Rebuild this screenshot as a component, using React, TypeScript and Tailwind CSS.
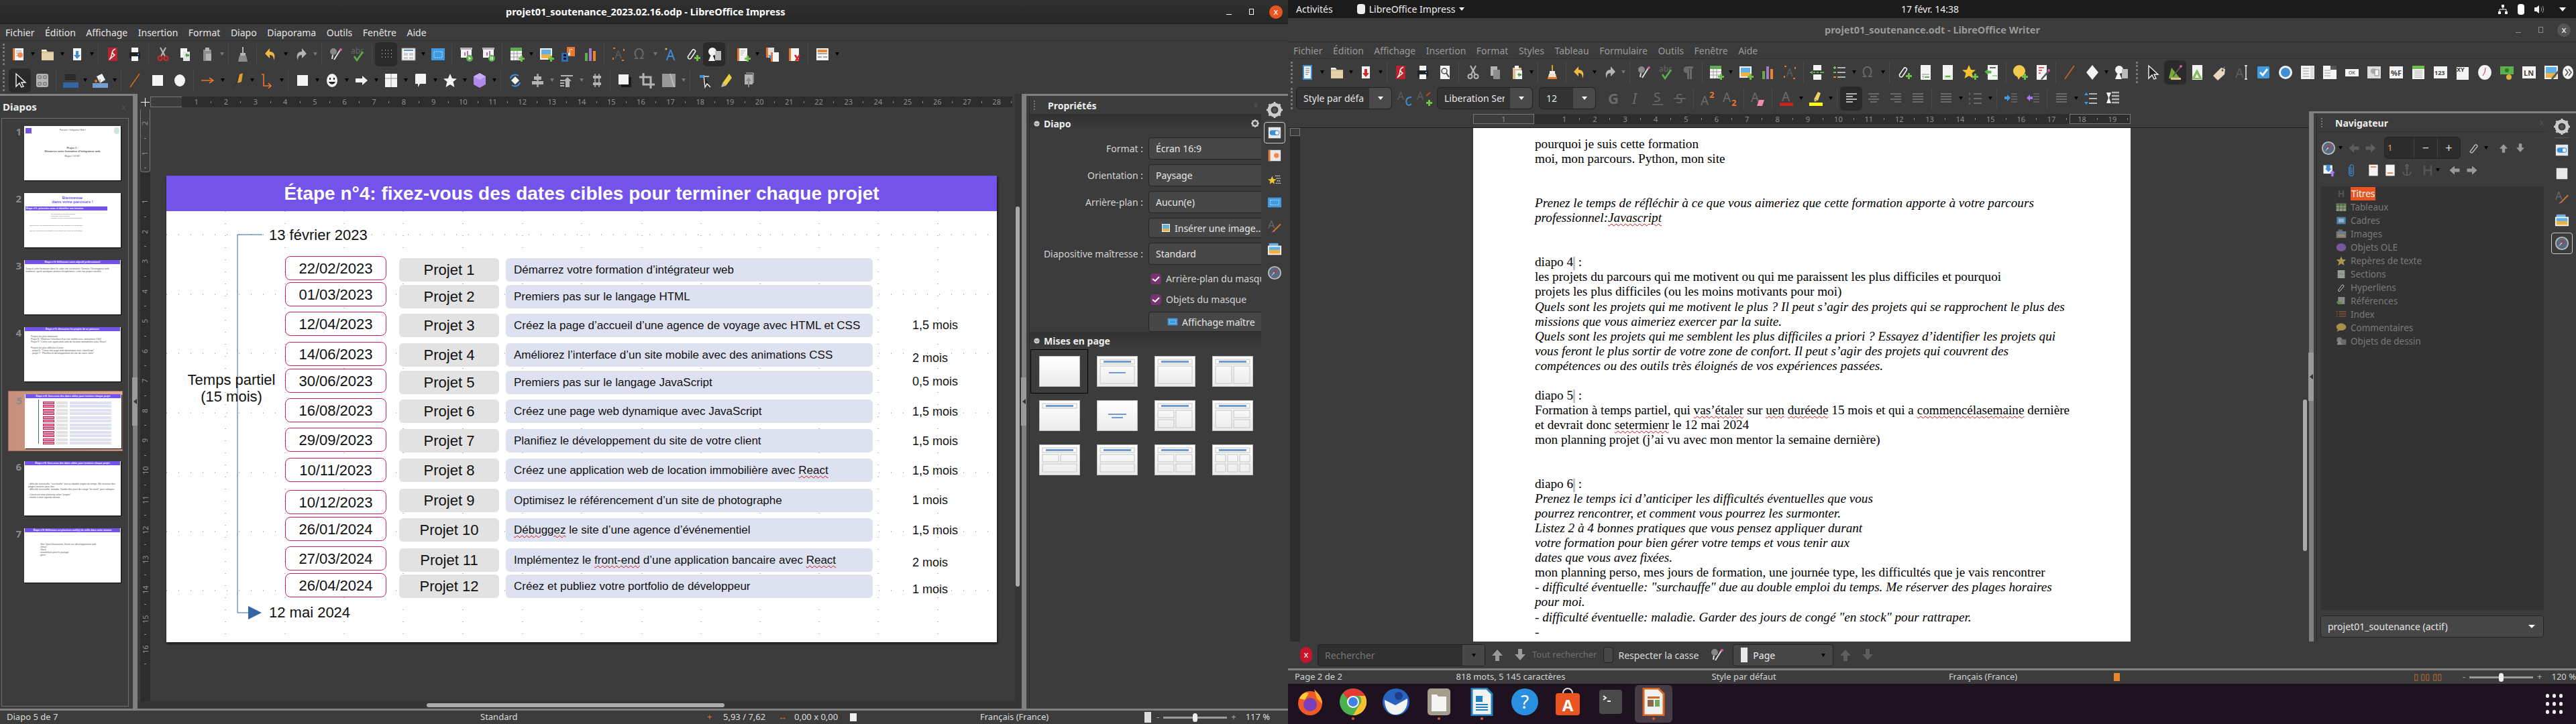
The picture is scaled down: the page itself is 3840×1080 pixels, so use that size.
import type { ReactNode } from "react";

const W = "#f4f4f4";
const G = "#b4b4b4";
const D = "#6a6a6a";

const icons: Record<string, ReactNode> = {
  new: <><path d="M4 3h16v18H4z" fill={W} /><path d="M4 3h3v18H4z" fill="#e8762c" /><circle cx="15" cy="13" r="4" fill="#f0894a" /><path d="M9 7h8M9 10h3M9 14h2" stroke="#999" /></>,
  newW: <><path d="M5 1h14v22H5z" fill="#3f8ed8" /><path d="M7 3h10v18H7z" fill={W} /><path d="M9 6h6M9 9h6M9 12h6M9 15h4" stroke="#777" /></>,
  folder: <><path d="M3 6h7l2 2h9v13H3z" fill="#e6d2aa" /><path d="M3 5h7l1 2H3z" fill={W} /><path d="M3 9h18" stroke="#c5ae82" /></>,
  save: <><path d="M6 3h12v18H6z" fill={W} /><path d="M10 7h4v6h3l-5 6-5-6h3z" fill="#3f8ed8" /></>,
  saveR: <><path d="M6 3h12v18H6z" fill={W} /><path d="M10 7h4v6h3l-5 6-5-6h3z" fill="#d6282c" /></>,
  pdf: <><path d="M5 2h14v20H5z" fill="#b8232f" /><path d="M16 4c-6 3-6 6-1 9-2 2-5 4-8 7 3-4 4-8 4-11" stroke={W} fill="none" strokeWidth="1.4" /></>,
  print: <><path d="M7 2h10v7H7z" fill={W} /><path d="M4 9h16v9H4z" fill="#222" /><path d="M7 15h10v7H7z" fill={W} /><path d="M16 11h2v2h-2z" fill="#3f8ed8" /></>,
  preview: <><path d="M5 2h14v20H5z" fill={W} /><circle cx="11" cy="10" r="4" fill="none" stroke="#444" strokeWidth="1.5" /><path d="M14 13l4 6" stroke="#444" strokeWidth="2" /></>,
  cut: <><path d="M8 2l7 13M16 2L9 15" stroke={G} strokeWidth="2.2" /><circle cx="7.5" cy="18" r="3" fill="none" stroke="#d6282c" strokeWidth="2" /><circle cx="16.5" cy="18" r="3" fill="none" stroke="#d6282c" strokeWidth="2" /></>,
  cutG: <><path d="M8 2l7 13M16 2L9 15" stroke={G} strokeWidth="2.2" /><circle cx="7.5" cy="18" r="3" fill="none" stroke={G} strokeWidth="2" /><circle cx="16.5" cy="18" r="3" fill="none" stroke={G} strokeWidth="2" /></>,
  copy: <><path d="M5 3h10v14H5z" fill={W} /><path d="M9 8h10v14H9z" fill="#e6e6e6" /><path d="M12 13l3-3v2h3v3h-3v2z" fill="#52a34a" /></>,
  copyG: <><path d="M5 3h10v14H5z" fill={G} /><path d="M9 8h10v14H9z" fill="#8c8c8c" /></>,
  paste: <><path d="M6 5h12v17H6z" fill="#8c8c8c" /><path d="M9 2h6v5H9z" fill={G} /><path d="M10 11h8v10h-8z" fill={G} /></>,
  pasteO: <><path d="M5 5h13v17H5z" fill="#d9bf8a" /><path d="M8 2h6v5H8z" fill={W} /><path d="M9 9h10v13H9z" fill={W} /><path d="M12 15l3-3v2h3v3h-3v2z" fill="#52a34a" /></>,
  brush: <><path d="M11 1h2v9h-2z" fill={G} /><path d="M8 10h8v4H8z" fill={G} /><path d="M7 14h10l2 9H5z" fill="#8c8c8c" /></>,
  brushO: <><path d="M11 1h2v9h-2z" fill="#e0a030" /><path d="M8 10h8v4H8z" fill={W} /><path d="M7 14h10l1 5H6z" fill="#e8e0c8" /><path d="M5 19h14v3H5z" fill="#e8762c" /></>,
  undo: <><path d="M10 3L3 11l7 7v-5c4 0 6 2 6 8 3-7 1-13-6-13z" fill="#f0b840" /></>,
  redo: <><path d="M14 3l7 8-7 7v-5c-4 0-6 2-6 8-3-7-1-13 6-13z" fill={G} /></>,
  spell: <><circle cx="8" cy="8" r="5" fill="#888" /><path d="M7 13l-1 6M19 4L9 20" stroke="#ddd" strokeWidth="2" /><circle cx="19" cy="5" r="2" fill="#d65aa0" /></>,
  abc: <><text x="1" y="11" fontSize="12" fill="#666" fontFamily="Noto Sans">abc</text><path d="M6 15l4 6 9-13" stroke="#5bb04a" strokeWidth="2.6" fill="none" /></>,
  grid: <path d="M5 6h1M10 6h1M14 6h1M19 6h1M5 11h1M10 11h1M14 11h1M19 11h1M5 16h1M10 16h1M14 16h1M19 16h1" stroke={G} strokeWidth="1.6" />,
  tview: <><path d="M2 3h20v18H2z" fill={W} stroke="#999" /><path d="M5 6h14" stroke="#5a90d0" strokeWidth="2" /><path d="M5 10h6v4H5zM13 10h6v4h-6zM5 16h6v3H5zM13 16h6v3h-6z" fill="#ccc" /></>,
  master: <><path d="M2 3h20v18H2z" fill="#3f9ae0" /><path d="M6 8h12v9H6z" fill="none" stroke="#bfe0fa" strokeDasharray="2 1" /></>,
  pres1: <><path d="M3 2h18v3H3z" fill={G} /><path d="M4 5h16v12H4z" fill={W} /><path d="M9 14V9h2v5zM13 14V7h2v7z" fill="#b070b0" /><circle cx="17" cy="18" r="5" fill="#5bb04a" /><path d="M15.5 15.5l4 2.5-4 2.5z" fill={W} /></>,
  pres2: <><path d="M3 2h18v3H3z" fill={G} /><path d="M4 5h16v12H4z" fill={W} /><path d="M9 14V9h2v5zM13 14V7h2v7z" fill="#b070b0" /><circle cx="17" cy="18" r="5" fill="#5bb04a" /><path d="M15 15.5h1.5v5H15zM17.5 15.5H19v5h-1.5z" fill={W} /></>,
  tablep: <><path d="M3 2h17v19H3z" fill={W} /><path d="M3 2h17v5H3z" fill="#5bb04a" /><path d="M8 2v19M13 2v19M3 11h17M3 16h17" stroke="#888" strokeWidth=".8" /><path d="M15 17h3v-3h3v3h3v3h-3v3h-3v-3h-3z" fill="#6fc04a" /></>,
  img: <><path d="M3 3h18v17H3z" fill={W} /><path d="M5 5h14v7H5z" fill="#5fb0e8" /><path d="M5 12h14v6H5z" fill="#f0b040" /><path d="M15 17h3v-3h3v3h3v3h-3v3h-3v-3h-3z" fill="#6fc04a" /></>,
  media: <><path d="M10 1h12v14H10z" fill="#e8762c" /><path d="M15 4v7a2 2 0 1 1-1-1V4h4v2z" fill={W} /><path d="M2 10h10v13H2z" fill="#2a6fb8" /><path d="M5 12h4v3H5zM5 17h4v3H5z" fill="#111" /></>,
  chart: <><path d="M4 10h4v12H4z" fill="#5bb04a" /><path d="M10 3h4v19h-4z" fill="#a878c8" /><path d="M16 7h4v15h-4z" fill="#e8862c" /></>,
  textbox: <><path d="M4 3h16v18H4z" fill="none" stroke="#e8762c" strokeDasharray="3 14" strokeWidth="2" /><text x="6.5" y="18" fontSize="16" fill="#5c5c5c" fontFamily="Noto Sans">A</text></>,
  omega: <text x="2" y="19" fontSize="21" fill={D} fontFamily="Noto Sans">Ω</text>,
  fontwork: <><text x="6" y="21" fontSize="21" fill="#3f8ed8" fontFamily="Noto Sans">A</text><circle cx="6" cy="4" r="1.5" fill="#f0b840" /></>,
  linkp: <><path d="M5 16l7-10a2.5 2.5 0 0 1 4 3l-6 9a2.5 2.5 0 0 1-4-3z" fill="none" stroke={W} strokeWidth="1.5" /><path d="M15 16h3v-3h3v3h3v3h-3v3h-3v-3h-3z" fill="#6fc04a" /></>,
  shapes: <><circle cx="9" cy="8" r="6" fill={W} /><path d="M13 7h9v14h-9z" fill="#bbb" /><path d="M8 10l5 12H3z" fill={W} /></>,
  slidep: <><path d="M4 3h15v19H4z" fill={W} /><path d="M4 3h3v19H4z" fill="#e8762c" /><path d="M9 7h7M9 10h5M9 13h3" stroke="#aaa" /><path d="M15 17h3v-3h3v3h3v3h-3v3h-3v-3h-3z" fill="#6fc04a" /></>,
  slidedup: <><path d="M3 2h12v15H3z" fill="#ddd" /><path d="M3 2h3v15H3z" fill="#e8762c" /><path d="M10 9h12v14H10z" fill={W} /><path d="M10 9h3v14h-3z" fill="#e8762c" /><path d="M6 13l4 6 2-5z" fill="#3f8ed8" /></>,
  slidedel: <><path d="M4 3h15v19H4z" fill={W} /><path d="M4 3h3v19H4z" fill="#e8762c" /><path d="M13 13l6 9M20 13l-6 9" stroke="#d6282c" strokeWidth="2.6" /></>,
  slidelay: <><path d="M3 3h18v18H3z" fill={W} /><path d="M5 5h14v4H5z" fill="#e8862c" /><path d="M5 11h14M5 16h6M13 16h6" stroke="#888" strokeWidth="1.6" /></>,
  select: <path d="M6 2v19l5-5 3 6 3-1-3-6h6z" fill="#222" stroke={W} strokeWidth="1.4" />,
  zoompan: <><rect x="3" y="2" width="18" height="20" rx="3" fill={G} /><path d="M6 5h4v4H6zM14 5h4v4h-4zM6 15h4v4H6zM14 15h4v4h-4z" fill="none" stroke="#666" /></>,
  linecol: <><path d="M4 4h16M4 7h16M4 10h16" stroke="#222" strokeWidth="2" /><path d="M1 15h23v8H1z" fill="#3465a4" /></>,
  fillcol: <><path d="M7 6l8-4 5 9-8 5z" fill={W} /><path d="M12 10v6" stroke="#666" /><circle cx="6" cy="13" r="2" fill="#e8762c" /><path d="M1 16h23v7H1z" fill="#729fcf" /></>,
  line: <path d="M4 22L18 2" stroke="#d0651e" strokeWidth="1.6" />,
  rect: <path d="M4 4h16v16H4z" fill={W} />,
  ellipse: <ellipse cx="12" cy="12" rx="8" ry="9" fill={W} />,
  arrow: <path d="M2 12h16M14 8l6 4-6 4" stroke="#e8762c" strokeWidth="1.6" fill="none" />,
  curve: <><path d="M14 4c-6 4 2 8-3 12s-6 3-6 6" stroke="#333" strokeWidth="1.6" fill="none" /><path d="M15 3l5-2-2 13-6 2z" fill="#e0a030" /></>,
  conn: <path d="M4 3h3v17h10M14 16l4 4-4 4" stroke="#e8762c" strokeWidth="1.6" fill="none" />,
  smiley: <><ellipse cx="12" cy="12" rx="8" ry="10" fill={W} /><path d="M9 8v3M15 8v3" stroke="#222" strokeWidth="2" /><path d="M7 14c2 5 8 5 10 0z" fill="#222" /></>,
  arrowr: <path d="M3 9h10V5l8 7-8 7v-4H3z" fill={W} />,
  flow: <><path d="M3 2h18v20H3z" fill={W} /><path d="M12 2v20M3 9h18" stroke="#999" /></>,
  callout: <path d="M5 2h14a1 1 0 0 1 1 1v14H11l-3 5v-5H4V3z" fill={W} />,
  star: <path d="M12 2l3 7 7 .5-5.5 4.5 2 8-6.500-4-6.500 4 2-8L2 9.500 9 9z" fill={W} />,
  cube: <><path d="M12 1l9 5v12l-9 5-9-5V6z" fill="#b08ae8" /><path d="M3 6l9 5 9-5-9-5z" fill="#c8aaf4" /></>,
  rotate: <><path d="M12 6l6 6-6 6-6-6z" fill={W} /><path d="M5 9c1-5 7-7 12-4M19 15c-1 5-7 7-12 4" stroke="#3f8ed8" strokeWidth="2" fill="none" /></>,
  align: <><path d="M11 2h3v20h-3z" fill="#999" /><path d="M7 6h11v5H7zM4 13h17v5H4z" fill={G} /></>,
  arrange: <><path d="M3 5h18" stroke={G} strokeWidth="2" /><path d="M13 7l6 6h-3v9h-6v-9H7z" fill={G} /><path d="M2 12h6M2 16h6M2 20h6" stroke={G} strokeWidth="2" /></>,
  distr: <><path d="M9 2h2v20H9zM15 2h2v20h-2z" fill="#999" /><path d="M7 5h12v4H7zM7 15h12v4H7z" fill={G} /></>,
  shadow: <><path d="M7 7h15v15H7z" fill="#1b1b1b" /><path d="M3 3h15v15H3z" fill={W} /></>,
  crop: <path d="M7 1v17h17M1 7h17v17" stroke={G} strokeWidth="3" fill="none" />,
  filter: <><path d="M2 2h20v20H2z" fill="#999" /><path d="M14 2l6 20" stroke="#bbb" strokeWidth="2" /></>,
  points: <><path d="M11 4l2 18 3-5 5 5" stroke={W} fill="#222" strokeWidth="1.4" /><path d="M5 4h6v4H5z" fill="#3f8ed8" /><path d="M11 6h8" stroke={G} strokeWidth="2" /></>,
  glue: <><path d="M6 16L16 2l4 6-9 12z" fill="#ecd040" /><path d="M6 16l5 4-7 2z" fill="#bbb" /></>,
  ext3d: <><path d="M6 3h12v15H6z" fill={G} /><path d="M8 1h11v15" stroke="#ccc" fill="none" /><path d="M12 7l4 6h-3v9h-2v-9H8z" fill="#8c8c8c" /></>,
  para: <path d="M9 3h10v3h-2v16h-3V6h-1v16h-3v-9a5 5 0 0 1-1-10z" fill={D} />,
  pagebr: <><path d="M6 1h12v8H6zM6 15h12v8H6z" fill={W} /><path d="M1 12h3M6 12h3M11 12h3M16 12h6" stroke="#5bb04a" strokeWidth="2" /><path d="M2 12l3-3v6z" fill="#5bb04a" /></>,
  field: <><path d="M9 5h12M9 12h12M9 19h12" stroke={G} strokeWidth="2" /><path d="M3 5h4M5 3v4M3 12h4" stroke="#6fc04a" strokeWidth="2" /><path d="M3 19h4" stroke="#e8862c" strokeWidth="2" /></>,
  foot: <><path d="M4 1h15v22H4z" fill={W} /><path d="M6 15h11" stroke="#888" /><text x="6" y="21" fontSize="6" fill="#333" fontFamily="Noto Sans">1</text><path d="M10 18h7v2h-7z" fill="#5bb04a" /></>,
  end: <><path d="M4 1h15v22H4z" fill={W} /><path d="M6 16h11v5H6z" fill="#cfe8c4" /><path d="M8 18h7" stroke="#5bb04a" strokeWidth="2" /></>,
  bookmark: <><path d="M10 1l3 7 7 .5-5.500 4.500 2 8-6.500-4-6.500 4 2-8L0 8.500 7 8z" fill="#f2c230" /><path d="M15 17h3v-3h3v3h3v3h-3v3h-3v-3h-3z" fill="#6fc04a" /></>,
  xref: <><path d="M5 1h15v22H5z" fill={W} /><path d="M8 5h9" stroke="#666" strokeWidth="2" /><path d="M1 11l4-3v2h5v3H5v2zM12 17h7" stroke="#5bb04a" fill="#5bb04a" strokeWidth="1" /></>,
  comment: <><circle cx="11" cy="10" r="9" fill="#f2c94c" /><path d="M8 18l2 5 3-5z" fill="#f2c94c" /><path d="M15 17h3v-3h3v3h3v3h-3v3h-3v-3h-3z" fill="#6fc04a" /></>,
  track: <><path d="M4 1h15v22H4z" fill={W} /><path d="M7 5h8M7 9h5M7 13h3" stroke="#d6282c" strokeWidth="1.4" /><path d="M10 22l11-13 2 2-11 12z" fill="#555" /><circle cx="22" cy="9" r="2" fill="#d65aa0" /></>,
  diamond: <path d="M12 1l9 11-9 11-9-11z" fill={W} />,
  design: <><path d="M3 21L7 5l13 16z" fill="#79a83c" /><path d="M6 23h15v-3H6z" fill="#d9c28a" /><path d="M9 18L21 3" stroke="#555" strokeWidth="2" /><circle cx="21" cy="3" r="2" fill="#d65aa0" /></>,
  props: <><path d="M5 1h15v22H5z" fill={W} /><path d="M4 22L12 7l8 15z" fill="#72b04a" opacity=".85" /><path d="M9 20l3-6 3 6z" fill={W} /></>,
  tag: <><path d="M15 5l6 2-1 8-10 9-7-7z" fill="#e8d8c0" /><circle cx="17" cy="9" r="1.500" fill="#555" /><path d="M17 8c1-3 3-4 4-4" stroke="#999" fill="none" /></>,
  textA: <><text x="3" y="20" fontSize="20" fill="#5c5c5c" fontFamily="Noto Sans">A</text><path d="M17 2h4M19 2v20M17 22h4" stroke={W} strokeWidth="1.4" /></>,
  check: <><rect x="3" y="3" width="18" height="18" rx="2" fill="#3f9ae0" /><path d="M7 12l4 4 7-9" stroke={W} strokeWidth="3" fill="none" /></>,
  radio: <><circle cx="12" cy="12" r="10" fill={W} /><circle cx="12" cy="12" r="7" fill="#3f8ed8" /></>,
  listb: <><path d="M2 2h20v20H2z" fill={W} /><path d="M5 6h9M5 10h9M5 14h9M5 18h9" stroke="#999" /><path d="M16 3h5v18h-5z" fill="#ddd" /></>,
  combo: <><path d="M2 2h20v20H2z" fill={W} /><path d="M4 9h9M4 13h9M4 17h9" stroke="#999" /><path d="M13 2h9v6h-9z" fill="#555" /></>,
  btn: <><path d="M2 7h20v11H2z" fill={W} /><text x="7" y="15" fontSize="7" fill="#333" fontFamily="Noto Sans">OK</text></>,
  imgbtn: <><path d="M2 3h20v18H2z" fill="#ddd" /><circle cx="11" cy="10" r="4" fill="#aaa" /><path d="M13 8h6v9h-6z" fill={W} stroke="#888" /></>,
  fmt: <><path d="M2 3h20v18H2z" fill={W} /><text x="4" y="17" fontSize="11" fontWeight="700" fill="#444" fontFamily="Noto Sans">%F</text></>,
  calc: <><path d="M3 2h18v20H3z" fill={W} /><path d="M3 2h18v5H3z" fill="#6fc04a" /><path d="M6 10h12M6 13h12M6 16h12M6 19h12" stroke="#aaa" /></>,
  numf: <><path d="M2 3h20v18H2z" fill={W} /><text x="3" y="16" fontSize="9" fontWeight="700" fill="#444" fontFamily="Noto Sans">123</text></>,
  date: <><path d="M3 4h18v19H3z" fill={W} /><text x="3" y="11" fontSize="9" fontWeight="700" fill="#333" fontFamily="Noto Sans">XY</text></>,
  clock: <><ellipse cx="12" cy="12" rx="10" ry="11" fill={W} /><path d="M12 12l1-7M12 12l-3 5" stroke="#d6282c" /></>,
  currency: <><path d="M2 3h20v12H2z" fill="#5bb04a" /><circle cx="12" cy="9" r="3" fill="#2f7a2c" /><circle cx="15" cy="19" r="4" fill="#e0b030" /></>,
  pattern: <><path d="M2 3h20v18H2z" fill={W} /><text x="4" y="17" fontSize="11" fontWeight="700" fill="#444" fontFamily="Noto Sans">LN</text></>,
  imgctl: <><path d="M2 2h20v20H2z" fill={W} /><path d="M4 4h16v9H4z" fill="#5fb0e8" /><path d="M4 13h16v7H4z" fill="#f0b040" /><path d="M12 21L22 9l2 2-10 12z" fill="#555" /></>,
  more: <><ellipse cx="12" cy="12" rx="8" ry="10" fill={W} /><path d="M8 7l4 5-4 5M13 7l4 5-4 5" stroke="#555" strokeWidth="1.600" fill="none" /></>,
  styleup: <><text x="1" y="14" fontSize="16" fill="#5c5c5c" fontFamily="Noto Sans">A</text><path d="M22 10c-7 0-9 4-7 10 2 3 5 2 7 0" stroke="#3f8ed8" strokeWidth="2" fill="none" /></>,
  stylenew: <><text x="1" y="14" fontSize="16" fill="#5c5c5c" fontFamily="Noto Sans">A</text><path d="M15 8L21 3" stroke="#c04a20" strokeWidth="2" /><path d="M15 17h3v-3h3v3h3v3h-3v3h-3v-3h-3z" fill="#6fc04a" /></>,
  bold: <text x="4" y="20" fontSize="22" fontWeight="700" fill={D} fontFamily="Noto Sans">G</text>,
  ital: <text x="7" y="20" fontSize="22" fontStyle="italic" fill={D} fontFamily="Noto Sans">I</text>,
  under: <><text x="6" y="17" fontSize="19" fill={D} fontFamily="Noto Sans">S</text><path d="M4 21h16" stroke={D} strokeWidth="1.600" /></>,
  strike: <><text x="6" y="19" fontSize="19" fill={D} fontFamily="Noto Sans">S</text><path d="M3 12h18" stroke={D} strokeWidth="1.600" /></>,
  sup: <><text x="1" y="22" fontSize="19" fill={D} fontFamily="Noto Sans">A</text><text x="14" y="11" fontSize="13" fontWeight="700" fill="#e8762c" fontFamily="Noto Sans">2</text></>,
  sub: <><text x="1" y="17" fontSize="19" fill={D} fontFamily="Noto Sans">A</text><text x="14" y="23" fontSize="13" fontWeight="700" fill="#e8762c" fontFamily="Noto Sans">2</text></>,
  erase: <><text x="1" y="17" fontSize="19" fill={D} fontFamily="Noto Sans">A</text><path d="M13 14h8l-3 9h-8z" fill="#f08ab0" /></>,
  colorA: <><text x="5" y="16" fontSize="19" fill={D} fontFamily="Noto Sans">A</text><path d="M2 18h20v5H2z" fill="#c9211e" /></>,
  hl: <><path d="M9 13L15 2l4 2-4 11z" fill="#f0d060" /><path d="M9 13l5 2-4 2z" fill="#bbb" /><path d="M2 18h20v5H2z" fill="#ffff00" /></>,
  alL: <path d="M4 5h16M4 9h10M4 13h16M4 17h10" stroke={G} strokeWidth="2" />,
  alC: <path d="M4 5h16M7 9h10M4 13h16M7 17h10" stroke={D} strokeWidth="2" />,
  alR: <path d="M4 5h16M10 9h10M4 13h16M10 17h10" stroke={D} strokeWidth="2" />,
  alJ: <path d="M4 5h16M4 9h16M4 13h16M4 17h16" stroke={D} strokeWidth="2" />,
  num: <><path d="M9 5h12M9 12h12M9 19h12" stroke={D} strokeWidth="2" /><path d="M3 3v4M3 11v3M3 18v3" stroke={D} strokeWidth="1.500" /></>,
  indent: <><path d="M12 5h9M12 9h9M12 13h9M12 17h9" stroke={D} strokeWidth="1.600" /><path d="M2 9h4V6l5 5-5 5v-3H2z" fill="#3f9ae0" /></>,
  outdent: <><path d="M12 5h9M12 9h9M12 13h9M12 17h9" stroke={D} strokeWidth="1.600" /><path d="M11 9H7V6l-5 5 5 5v-3h4z" fill="#a878e8" /></>,
  psp: <><path d="M9 5h12M9 12h12M9 19h12" stroke={G} strokeWidth="2" /><path d="M2 7l3-4 3 4zM2 17l3 4 3-4z" fill="#3f9ae0" /></>,
  tabs: <><path d="M10 3h11M10 8h11M10 13h11M10 18h11" stroke={G} strokeWidth="2.400" /><path d="M2 3h7l-3 8 3 8H2l3-8z" fill={W} /></>,
  gear: <><circle cx="12" cy="12" r="8" fill="none" stroke="#ccc" strokeWidth="5" /><path d="M12 0v4M12 20v4M0 12h4M20 12h4M3.500 3.500l3 3M17.500 17.500l3 3M3.500 20.500l3-3M17.500 6.500l3-3" stroke="#ccc" strokeWidth="3" /><circle cx="12" cy="12" r="3" fill="#555" /></>,
  toggle: <><path d="M2 3h20v18H2z" fill="#e8e8e8" /><rect x="4" y="8" width="16" height="8" rx="4" fill="#3f8ed8" /><circle cx="16" cy="12" r="3" fill={W} /></>,
  page: <path d="M3 3h18v18H3z" fill="#e8e8e8" />,
  slides: <><path d="M2 3h20v18H2z" fill="#e8e8e8" /><path d="M2 3h3v18H2z" fill="#e8762c" /><circle cx="15" cy="12" r="4" fill="#f0894a" /></>,
  anim: <><path d="M8 7l2 5 5 .5-4 3 1 5-4-3-4 3 1-5-4-3 5-.5z" fill="#f2c230" /><path d="M13 7h9M15 11h7M16 15h6M14 19h8" stroke="#ddd" strokeDasharray="2 1" strokeWidth="1.500" /></>,
  mast: <><path d="M1 4h22v16H1z" fill="#3f9ae0" /><path d="M5 8h14v8H5z" fill="none" stroke="#cfe6fa" strokeDasharray="2 1" /></>,
  abrush: <><text x="1" y="16" fontSize="18" fill="#666" fontFamily="Noto Sans">A</text><path d="M10 21L22 9" stroke="#d0762c" strokeWidth="2" /><path d="M6 23l5-4 1 2z" fill="#d65aa0" /></>,
  gallery: <><path d="M3 2h15v5H3z" fill="#6fb0e0" /><path d="M1 6h22v15H1z" fill={W} /><path d="M3 8h18v5H3z" fill="#5fb0e8" /><path d="M3 13h18v6H3z" fill="#f0b040" /></>,
  compass: <><circle cx="12" cy="12" r="10" fill="#596a80" stroke="#bbb" strokeWidth="2" /><path d="M18 5l-5 6-7 7 5-7z" fill={W} /><path d="M18 5l-5 7-3-2z" fill="#c0303a" /></>,
  navup: <path d="M12 4l8 9h-5v8H9v-8H4z" fill="#9a9a9a" />,
  navdown: <path d="M12 20l8-9h-5V3H9v8H4z" fill="#9a9a9a" />,
  navleft: <path d="M3 12l9-8v5h9v6h-9v5z" fill="#9a9a9a" />,
  navright: <path d="M21 12l-9-8v5H3v6h9v5z" fill="#9a9a9a" />,
  dimleft: <path d="M3 12l9-8v5h9v6h-9v5z" fill="#5e5e5e" />,
  dimright: <path d="M21 12l-9-8v5H3v6h9v5z" fill="#5e5e5e" />,
  dimup: <path d="M12 4l8 9h-5v8H9v-8H4z" fill="#5e5e5e" />,
  dimdown: <path d="M12 20l8-9h-5V3H9v8H4z" fill="#5e5e5e" />,
  link: <path d="M5 18l9-12a3 3 0 0 1 4 3l-9 11a3 3 0 0 1-4-2z" fill="none" stroke="#c8c8c8" strokeWidth="1.500" />,
  mail: <><path d="M3 3h16v15H3z" fill={W} /><path d="M8 2h7v7h3l-6 6-6-6h2z" fill="#3f8ed8" /><path d="M17 23v-6h-3l5-5 5 5h-3v6z" fill="#a878e8" /></>,
  clip: <path d="M8 6v12a4 4 0 0 0 8 0V5a3 3 0 0 0-6 0v12a1.500 1.500 0 0 0 3 0V7" fill="none" stroke="#3f8ed8" strokeWidth="1.300" />,
  hdr: <><path d="M4 2h16v20H4z" fill={W} /><path d="M7 6h10" stroke="#e8762c" strokeWidth="2" /></>,
  ftr: <><path d="M4 2h16v20H4z" fill={W} /><path d="M7 17h10" stroke="#e8762c" strokeWidth="2" /></>,
  anchor: <path d="M12 5v16M5 14c0 5 4 7 7 7s7-2 7-7M9 9h6M12 2a2 2 0 1 0 .01 0" stroke="#5e5e5e" strokeWidth="2" fill="none" />,
  hH: <path d="M6 3v18M18 3v18M6 12h12" stroke="#555" strokeWidth="3" />,
  nTable: <><path d="M1 4h22v17H1z" fill="#8a9a78" /><path d="M1 4h22v5H1z" fill="#5f7f48" /><path d="M8 4v17M16 4v17M1 14h22" stroke="#444" /></>,
  nFrame: <><path d="M2 4h20v16H2z" fill="#4f83ad" /><path d="M6 8h12v8H6z" fill="#9ab0c4" /></>,
  nImage: <><path d="M5 2h10v4H5z" fill="#666" /><path d="M1 6h22v15H1z" fill="#777" /><path d="M4 9h16v4H4z" fill="#4f83ad" /><path d="M4 13h16v5H4z" fill="#a88a50" /></>,
  nOle: <ellipse cx="12" cy="12" rx="11" ry="9" fill="#76589f" />,
  nStar: <path d="M12 2l3 7 8 .5-6 5 2 8-7-4-7 4 2-8-6-5 8-.5z" fill="#ab9551" />,
  nSec: <><path d="M4 3h16v18H4z" fill="#9a9a9a" /><path d="M7 10h10v4H7z" fill="#72a060" /></>,
  nRef: <><path d="M5 3h15v16H5z" fill="#8a8a8a" /><path d="M1 15l5-4v3h8v3H6v3z" fill="#5a8a45" /></>,
  nIdx: <path d="M7 6h16M7 11h16M7 16h16M1 6h3M1 11h3M1 16h3" stroke="#8a5a38" strokeWidth="2" />,
  nCom: <><ellipse cx="12" cy="10" rx="11" ry="8" fill="#a8904a" /><path d="M5 15l-3 6 8-4z" fill="#a8904a" /></>,
  nDraw: <><circle cx="8" cy="9" r="6" fill="#7d7d7d" /><path d="M11 8h12v12H11z" fill="#6c6c6c" /><path d="M8 9l6 11H2z" fill="#8c8c8c" /></>,
};

function Ico({ k, size = 24 }: { k: string; size?: number }) {
  return (
    <svg viewBox="0 0 24 24" width={size} height={size} className="shrink-0">
      {icons[k]}
    </svg>
  );
}

function Caret({ dim = false }: { dim?: boolean }) {
  return <span className={`block w-0 h-0 border-x-[3.5px] border-x-transparent border-t-[5px] ${dim ? "border-t-[#777]" : "border-t-black"}`} />;
}

// "|" separator, "v" dropdown arrow, "^" dim dropdown arrow, "*name" pressed button
function IconBar({ items }: { items: string }) {
  return (
    <>
      {items.split(" ").map((it, i) => {
        if (it === "|") return <span key={i} className="w-[9px] h-[32px] flex justify-center"><span className="w-px h-full bg-[#4a4a4a]" /></span>;
        if (it === "v" || it === "^") return <span key={i} className="w-[11px] flex justify-center"><Caret dim={it === "^"} /></span>;
        const pressed = it.startsWith("*");
        return (
          <span key={i} className={`w-[33px] h-[36px] flex items-center justify-center shrink-0 ${pressed ? "bg-[#2a2a2a] rounded-md" : ""}`}>
            <Ico k={pressed ? it.slice(1) : it} />
          </span>
        );
      })}
    </>
  );
}

function Grip() {
  return <span className="w-[3px] h-[32px] shrink-0 border-l-[3px] border-dotted border-[#777]" />;
}

function HRuler({ from, to, pitch }: { from: number; to: number; pitch: string }) {
  const nums = [];
  for (let n = from; n <= to; n++) nums.push(n);
  return (
    <>
      {nums.map((n) => (
        <span key={n} className={`flex items-center h-full ${pitch}`}>
          <span className="flex-1 text-center text-[11px] leading-[14px] text-[#8e8e8e]">{n}</span>
          <span className="w-px h-[3px] bg-[#8e8e8e]" />
        </span>
      ))}
    </>
  );
}

function VRuler() {
  const top = [2, 1];
  const nums = [1, 2, 3, 4, 5, 6, 7, 8, 9, 10, 11, 12, 13, 14, 15, 16];
  const cell = (n: number, key: string) => (
    <span key={key} className="h-[44.5px] flex flex-col items-center shrink-0">
      <span className="flex-1 flex items-center text-[11px] leading-[14px] text-[#8e8e8e] -rotate-90">{n}</span>
      <span className="w-[3px] h-px bg-[#8e8e8e]" />
    </span>
  );
  return (
    <div className="w-[15px] flex flex-col overflow-hidden">
      <div className="h-[96px] mt-[-2px] border border-[#777] rounded-sm flex flex-col shrink-0">{top.map((n) => cell(n, `t${n}`))}</div>
      <div className="bg-[#2d2d2d] flex-1 flex flex-col pt-[22px]">{nums.map((n) => cell(n, `b${n}`))}</div>
    </div>
  );
}

function Sp({ children }: { children: ReactNode }) {
  return <span className="underline decoration-wavy decoration-[#d01010] decoration-1 underline-offset-2">{children}</span>;
}

const rows = [
  { date: "22/02/2023", p: "Projet 1", d: "Démarrez votre formation d’intégrateur web", m: "", gap: "mt-0", off: "mt-[3px]", mo: "mt-0" },
  { date: "01/03/2023", p: "Projet 2", d: "Premiers pas sur le langage HTML", m: "", gap: "mt-[3px]", off: "mt-[4px]", mo: "mt-0" },
  { date: "12/04/2023", p: "Projet 3", d: "Créez la page d’accueil d’une agence de voyage avec HTML et CSS", m: "1,5 mois", gap: "mt-[8px]", off: "mt-[3px]", mo: "mt-[2px]" },
  { date: "14/06/2023", p: "Projet 4", d: "Améliorez l’interface d’un site mobile avec des animations CSS", m: "2 mois", gap: "mt-[9px]", off: "mt-[2px]", mo: "mt-[6px]" },
  { date: "30/06/2023", p: "Projet 5", d: "Premiers pas sur le langage JavaScript", m: "0,5 mois", gap: "mt-[4px]", off: "mt-[3px]", mo: "mt-[1px]" },
  { date: "16/08/2023", p: "Projet 6", d: "Créez une page web dynamique avec JavaScript", m: "1,5 mois", gap: "mt-[8px]", off: "mt-[2px]", mo: "mt-[2px]" },
  { date: "29/09/2023", p: "Projet 7", d: "Planifiez le développement du site de votre client", m: "1,5 mois", gap: "mt-[8px]", off: "mt-[2px]", mo: "mt-[2px]" },
  { date: "10/11/2023", p: "Projet 8", d: <>Créez une application web de location immobilière avec <Sp>React</Sp></>, m: "1,5 mois", gap: "mt-[9px]", off: "mt-[1px]", mo: "mt-[1px]" },
  { date: "10/12/2023", p: "Projet 9", d: "Optimisez le référencement d’un site de photographe", m: "1 mois", gap: "mt-[12px]", off: "-mt-[2px]", mo: "-mt-[3px]" },
  { date: "26/01/2024", p: "Projet 10", d: <><Sp>Débuggez</Sp> le site d’une agence d’événementiel</>, m: "1,5 mois", gap: "mt-[4px]", off: "mt-[2px]", mo: "mt-[2px]" },
  { date: "27/03/2024", p: "Projet 11", d: <>Implémentez le <Sp>front-end</Sp> d’une application bancaire avec <Sp>React</Sp></>, m: "2 mois", gap: "mt-[8px]", off: "mt-[3px]", mo: "mt-[6px]" },
  { date: "26/04/2024", p: "Projet 12", d: "Créez et publiez votre portfolio de développeur", m: "1 mois", gap: "mt-[4px]", off: "mt-[2px]", mo: "mt-[6px]" },
];

function GridDots() {
  const xs = [88, 177, 265, 353, 442, 531, 619, 709, 797, 885, 973, 1061, 1150];
  const ys = [88, 177, 265, 354, 443, 531, 619];
  return (
    <svg className="absolute left-0 top-0 w-full h-full" viewBox="0 0 1238 696">
      {xs.map((x) => <path key={x} d={`M${x} 53V696`} stroke="#777" strokeWidth="1" strokeDasharray="1 17" />)}
      {ys.map((y) => <path key={y} d={`M0 ${y}H1238`} stroke="#777" strokeWidth="1" strokeDasharray="1 17" />)}
    </svg>
  );
}

function Slide() {
  return (
    <div className="relative w-[1238px] h-[696px] bg-white shrink-0 font-['Liberation_Sans',sans-serif] text-[#111] shadow-[1px_2px_3px_#111]">
      <GridDots />
      <svg className="absolute left-0 top-0 w-full h-full" viewBox="0 0 1238 696">
        <path d="M143 88H106V652H125" fill="none" stroke="#3465a4" strokeWidth="1" />
        <path d="M122 642L142 652L122 662z" fill="#3465a4" />
      </svg>
      <div className="relative h-[53px] bg-[#7353ea] text-white font-bold text-[28px] flex items-center justify-center">
        Étape n°4: fixez-vous des dates cibles pour terminer chaque projet
      </div>
      <div className="relative pl-[153px] pt-[21px] h-[30px] box-content text-[22px] leading-[30px]">13 février 2023</div>
      <div className="relative pl-[177px] pt-[16px]">
        {rows.map((r) => (
          <div key={r.date} className={`flex h-[36px] items-start ${r.gap}`}>
            <div className="w-[151px] h-[36px] rounded-lg border-[1.5px] border-[#c9215d] bg-white flex items-center justify-center text-[22px] shrink-0">{r.date}</div>
            <div className={`w-[149px] h-[35px] ml-[19px] rounded-md bg-[#e2e2e2] flex items-center justify-center text-[22px] shrink-0 ${r.off}`}>{r.p}</div>
            <div className={`w-[547px] h-[35px] ml-[10px] rounded-md bg-[#dee1f0] flex items-center pl-[12px] text-[17px] whitespace-nowrap shrink-0 ${r.off}`}><span>{r.d}</span></div>
            <div className={`ml-[59px] h-[36px] flex items-center text-[18px] whitespace-nowrap ${r.mo}`}>{r.m}</div>
          </div>
        ))}
      </div>
      <div className="relative pl-[153px] mt-[8px] text-[22px] leading-[30px]">12 mai 2024</div>
      <div className="absolute left-[22px] top-[292px] w-[150px] text-center text-[22px] leading-[25px] whitespace-nowrap">Temps partiel<br />(15 mois)</div>
    </div>
  );
}

function Mini({ n, active, children }: { n: number; active?: boolean; children: ReactNode }) {
  return (
    <div className="h-[100px] flex items-center pl-[9px]">
      <div className={`flex items-center w-[171px] h-[90px] ${active ? "bg-[linear-gradient(90deg,#c48f7d,#e3ab98)] border border-[#a86e5a]" : ""}`}>
        <span className="w-[20px] self-start mt-[3px] text-right text-[15px] font-bold text-[#8a8a8a] leading-[20px]">{n}</span>
        <div className="ml-[4px] w-[144px] h-[81px] bg-white overflow-hidden text-[#555] font-['Liberation_Sans',sans-serif] shadow-[1px_1px_1px_#111]">{children}</div>
      </div>
    </div>
  );
}

function MiniHead({ children }: { children: ReactNode }) {
  return <div className="h-[6px] mx-px bg-[#7353ea] text-white text-[3.500px] leading-[6px] text-center font-bold">{children}</div>;
}

function Thumbs() {
  return (
    <div className="w-[198px] shrink-0 flex flex-col">
      <div className="h-[33px] flex items-center justify-between pl-[4px] pr-[10px] font-bold text-[15px] text-[#eeeeee]">
        Diapos<span className="text-[#555] font-normal text-[13px]">x</span>
      </div>
      <div className="ml-[2px] w-[190px] h-[878px] border border-[#6e6e6e] pt-[1px] overflow-hidden">
        <Mini n={1}>
          <div className="flex items-center justify-between px-[2px] h-[14px]"><span className="w-[9px] h-[8px] bg-[#7353ea]" /><span className="text-[3px]">Parcours « Intégrateur Web »</span><span className="w-[8px] h-[10px] rounded-full bg-[#cfe6da]" /></div>
          <div className="mt-[16px] text-center text-[4px] leading-[5px] font-bold">Projet 1 :<br />Démarrez votre formation d’intégrateur web</div>
          <div className="mt-[3px] text-center text-[3px]">Magou C DU BIT</div>
        </Mini>
        <Mini n={2}>
          <div className="mt-[4px] text-center text-[6px] leading-[6px] text-[#7353ea] font-bold">Bienvenue<br />dans votre parcours !</div>
          <div className="mt-[4px] mx-[2px] w-[122px] h-[6px] bg-[#7353ea] text-white text-[3.500px] leading-[6px] font-bold pl-px">Étape n°1: présentez-vous et identifiez vos besoins</div>
          <div className="mt-[4px] ml-[40px] text-[2.500px] leading-[3px]">Se présenter en quelques lignes<br />Présenter votre parcours<br />Identifier ce que vous aimeriez apprendre</div>
          <div className="mt-[8px] ml-[8px] text-[2.500px] leading-[3px]">Quelles sont vos motivations pour suivre cette formation et vos attentes</div>
          <div className="mt-[5px] ml-[8px] text-[2.500px] leading-[3px]">Quelles compétences souhaitez-vous acquérir au cours de la formation</div>
        </Mini>
        <Mini n={3}>
          <MiniHead>Étape n°2: Définissez votre objectif professionnel</MiniHead>
          <div className="mt-[5px] mx-[2px] text-[3.500px] leading-[4px]">Jusqu’à cette formation dans le cadre me reconvertir. Demain, Développeur web freelance, après quelques années d’expérience, créer ma propre société.</div>
        </Mini>
        <Mini n={4}>
          <MiniHead>Étape n°3: découvrez les projets de ce parcours</MiniHead>
          <div className="mt-[6px] ml-[10px] text-[3.500px] leading-[4px]">Projets les plus motivants<br />Projet 8: “Réalisez l’interface d’un site mobile avec animations CSS”<br />Projet 9: “Créez une application web de location immobilière avec React”</div>
          <div className="mt-[5px] ml-[10px] text-[3.500px] leading-[4px]">Projets les plus difficiles à priori<br />- projet 6: “Créez une page web dynamique avec JavaScript”<br />- projet 7: “Planifiez le développement du site de votre client”</div>
        </Mini>
        <Mini n={5} active>
          <MiniHead>Étape n°4: fixez-vous des dates cibles pour terminer chaque projet</MiniHead>
          <div className="flex mt-[2px] ml-[20px]">
            <div className="w-px h-[66px] bg-[#3465a4] mr-[6px]" />
            <div className="flex flex-col gap-[1.500px] mt-[3px]">
              {rows.map((r) => (
                <div key={r.date} className="flex gap-[3px] items-center h-[4px]">
                  <span className="w-[17px] h-[4px] border-[0.5px] border-[#c9215d] bg-[#e090a8]" />
                  <span className="w-[17px] h-[4px] bg-[#e2e2e2]" />
                  <span className="w-[62px] h-[4px] bg-[#dee1f0]" />
                </div>
              ))}
            </div>
          </div>
        </Mini>
        <Mini n={6}>
          <MiniHead>Étape n°4: fixez-vous des dates cibles pour terminer chaque projet</MiniHead>
          <div className="mt-[26px] mx-[6px] text-[3.500px] leading-[4px]">- difficulté éventuelle: "surchauffe" due au double emploi du temps. Me réserver des plages horaires pour moi.<br />- difficulté éventuelle: maladie. Garder des jours de congé "en stock" pour rattraper.<br />-<br />- Construire mon planning selon "projets"<br />- mettre à mon agenda mentor</div>
        </Mini>
        <Mini n={7}>
          <MiniHead>Étape n°5: Définissez un plusieurs outil(s) de veille dans votre secteur</MiniHead>
          <div className="mt-[16px] ml-[22px] text-[3.500px] leading-[4px]">- Site OpenClassrooms, forum sur développement web<br />- Gmail<br />- Slack<br />- newsletters pour le partage<br />- gérer</div>
        </Mini>
      </div>
    </div>
  );
}

function Strip({ dark }: { dark?: boolean }) {
  return (
    <div className="w-[7px] shrink-0 bg-[#808080] flex flex-col items-center relative">
      <div className={`absolute ${dark ? "top-[360px]" : "top-[423px]"} -left-px w-[8px] h-[72px] bg-[#9a9a9a] flex items-center justify-center`}>
        <span className="w-0 h-0 border-y-[4px] border-y-transparent border-r-[5px] border-r-[#333]" />
      </div>
    </div>
  );
}

function Field({ label, children, h = "h-[33px]", mt = "mt-[7px]" }: { label?: string; children: ReactNode; h?: string; mt?: string }) {
  return (
    <div className={`flex items-center ${mt}`}>
      <span className="w-[169px] text-right text-[14px] text-[#d4d4d4] whitespace-nowrap">{label}</span>
      <div className={`ml-[8px] flex-1 ${h} flex items-center pl-[10px] border border-r-0 border-[#262626] rounded-l bg-[#474747] text-[14px] text-[#e6e6e6] whitespace-nowrap overflow-hidden`}>{children}</div>
    </div>
  );
}

function Check({ label, mt }: { label: string; mt: string }) {
  return (
    <div className={`flex items-center pl-[180px] ${mt}`}>
      <span className="w-[16px] h-[16px] rounded-sm bg-[#78346f] flex items-center justify-center shrink-0">
        <svg viewBox="0 0 16 16" width="16" height="16"><path d="M3 8l4 3 6-6" stroke="#fff" strokeWidth="2" fill="none" /></svg>
      </span>
      <span className="ml-[7px] text-[14px] text-[#d4d4d4] whitespace-nowrap">{label}</span>
    </div>
  );
}

const layouts: number[][][] = [
  [],
  [[5, 5, 51, 7], [5, 15, 51, 26]],
  [[5, 5, 51, 7], [5, 15, 51, 26]],
  [[5, 5, 51, 7], [5, 15, 24, 26], [32, 15, 24, 26]],
  [[5, 5, 51, 7]],
  [],
  [[5, 5, 51, 7], [5, 15, 24, 11], [5, 29, 24, 12], [32, 15, 24, 26]],
  [[5, 5, 51, 7], [5, 15, 24, 26], [32, 15, 24, 11], [32, 29, 24, 12]],
  [[5, 5, 51, 7], [5, 15, 24, 11], [32, 15, 24, 11], [5, 29, 51, 12]],
  [[5, 5, 51, 7], [5, 15, 51, 11], [5, 29, 51, 12]],
  [[5, 5, 51, 7], [5, 15, 24, 11], [32, 15, 24, 11], [5, 29, 24, 12], [32, 29, 24, 12]],
  [[5, 5, 51, 7], [5, 15, 15, 11], [23, 15, 15, 11], [41, 15, 15, 11], [5, 29, 15, 12], [23, 29, 15, 12], [41, 29, 15, 12]],
];

function Tile({ boxes, i }: { boxes: number[][]; i: number }) {
  return (
    <div className={`w-[86px] h-[66px] flex items-center justify-center ${i === 0 ? "border border-black" : ""}`}>
      <svg width="61" height="46" viewBox="0 0 61 46">
        <defs><linearGradient id="tileGrad" x1="0" y1="0" x2="0" y2="1"><stop offset="0" stopColor="#fff" /><stop offset="1" stopColor="#ebebeb" /></linearGradient></defs>
        <rect x=".5" y=".5" width="60" height="45" fill="url(#tileGrad)" stroke="#bdbdbd" />
        {boxes.map((b, j) => <rect key={j} x={b[0]} y={b[1]} width={b[2]} height={b[3]} fill="none" stroke="#c4c4c4" />)}
        {boxes.length > 0 && <rect x="10" y="7" width="41" height="3" fill="#6f9bd2" />}
        {i === 1 && <rect x="18" y="24" width="25" height="2" fill="#6f9bd2" />}
        {i === 5 && <><rect x="17" y="20" width="27" height="2" fill="#6f9bd2" /><rect x="22" y="25" width="17" height="2" fill="#6f9bd2" /></>}
      </svg>
    </div>
  );
}

function DeckHead({ label, gear }: { label: string; gear?: boolean }) {
  return (
    <div className="h-[26px] flex items-center pl-[6px] bg-[linear-gradient(180deg,#323232,#3c3c3c)] font-bold text-[14px] text-[#eeeeee] shrink-0">
      <svg viewBox="0 0 10 10" width="9" height="9"><circle cx="5" cy="5" r="4.500" fill="#ccc" /><path d="M2.500 4L5 6.500 7.500 4" stroke="#333" fill="none" /></svg>
      <span className="ml-[6px]">{label}</span>
      {gear && <span className="ml-auto mr-[3px]"><Ico k="gear" size={12} /></span>}
    </div>
  );
}

function SideTabs({ items, selected }: { items: string[]; selected: number }) {
  return (
    <div className="flex-1 flex flex-col items-center pt-[4px]">
      {items.map((k, i) => (
        <div key={i} className={`flex items-center justify-center shrink-0 ${i === 0 ? "h-[33px] border-b border-[#555] w-[22px]" : i === selected ? "w-[32px] h-[32px] border border-[#ccc] rounded mt-[1px]" : "w-[32px] h-[35px]"}`}>
          <Ico k={k} size={i === 0 ? 24 : 22} />
        </div>
      ))}
    </div>
  );
}

function ImpressSidebar() {
  return (
    <div className="flex-1 flex flex-col border-t-[3px] border-[#808080] min-w-0">
      <div className="flex flex-1 pt-[1px]">
        <div className="w-[346px] ml-[4px] shrink-0 flex flex-col border-l border-[#2e2e2e] overflow-hidden">
          <div className="h-[27px] flex items-center bg-[#3c3c3c] border-b border-[#333] shrink-0">
            <span className="ml-[6px] h-[14px] border-l-2 border-dotted border-[#777]" />
            <span className="ml-[19px] font-bold text-[14px] text-[#eeeeee]">Propriétés</span>
            <span className="ml-auto mr-[5px] text-[12px] text-[#555]">x</span>
          </div>
          <DeckHead label="Diapo" gear />
          <div className="h-[298px] shrink-0">
            <Field label="Format :" mt="mt-[8px]">Écran 16:9</Field>
            <Field label="Orientation :">Paysage</Field>
            <Field label="Arrière-plan :">Aucun(e)</Field>
            <Field h="h-[30px]">
              <svg viewBox="0 0 14 14" width="14" height="14" className="ml-[8px] mr-[6px] shrink-0"><path d="M.5.5h13v13H.5z" fill="#fff" stroke="#444" /><path d="M2 2h10v6H2z" fill="#5fb0e8" /><path d="M2 8h10v4H2z" fill="#f0b040" /></svg>
              Insérer une image...
            </Field>
            <Field label="Diapositive maîtresse :">Standard</Field>
            <Check label="Arrière-plan du masque" mt="mt-[10px]" />
            <Check label="Objets du masque" mt="mt-[10px]" />
            <Field h="h-[30px]" mt="mt-[8px]">
              <span className="ml-[17px] mr-[6px]"><Ico k="mast" size={16} /></span>Affichage maître
            </Field>
          </div>
          <DeckHead label="Mises en page" />
          <div className="grid grid-cols-4 w-[344px] ml-px">
            {layouts.map((b, i) => <Tile key={i} boxes={b} i={i} />)}
          </div>
        </div>
        <SideTabs items={["gear", "toggle", "slides", "anim", "mast", "abrush", "gallery", "compass"]} selected={1} />
      </div>
    </div>
  );
}

function Slider() {
  return (
    <span className="flex items-center gap-[6px] text-[#aaaaaa]">
      <span>-</span>
      <span className="w-[95px] h-[3px] bg-[#9a9a9a] flex justify-center items-center"><span className="w-[7px] h-[13px] rounded-full bg-[#eeeeee]" /></span>
      <span>+</span>
    </span>
  );
}

function ImpressWindow() {
  return (
    <div className="w-[1920px] shrink-0 flex flex-col h-[1080px] bg-[#3c3c3c] font-['Noto_Sans',sans-serif]">
      <div className="h-[36px] shrink-0 bg-[linear-gradient(180deg,#303030,#262626)] border-b border-[#1f1f1f] flex items-center relative">
        <span className="absolute left-[754px] text-[14.500px] font-bold text-white">projet01_soutenance_2023.02.16.odp - LibreOffice Impress</span>
        <div className="ml-auto flex items-center mr-[8px]">
          <span className="w-[8px] h-px bg-white mt-[8px]" />
          <span className="ml-[26px] w-[7px] h-[9px] border border-white" />
          <span className="ml-[23px] w-[20px] h-[20px] rounded-full bg-[#e95420] text-white text-[13px] leading-[19px] text-center">x</span>
        </div>
      </div>
      <div className="h-[25px] shrink-0 flex items-center gap-[15.500px] pl-[8px] text-[14px] text-[#e4e4e4] border-b border-[#333]">
        {["Fichier", "Édition", "Affichage", "Insertion", "Format", "Diapo", "Diaporama", "Outils", "Fenêtre", "Aide"].map((m) => <span key={m}>{m}</span>)}
      </div>
      <div className="h-[39px] shrink-0 flex items-center pl-[4px]">
        <Grip /><span className="w-[3px]" />
        <IconBar items="new v folder v save v | pdf print | cut copy paste ^ | brush | undo v redo ^ | spell abc | *grid tview v master | pres1 pres2 | tablep v img media chart | textbox omega ^ fontwork linkp *shapes | slidep v slidedup slidedel | slidelay v" />
      </div>
      <div className="h-[39px] shrink-0 flex items-center pl-[4px]">
        <Grip /><span className="w-[6px]" />
        <IconBar items="*select zoompan | linecol v fillcol v | line rect ellipse | arrow v curve v conn v | rect v smiley v arrowr v flow v callout v star v cube v | rotate align ^ arrange ^ distr | shadow crop filter ^ | points glue ext3d" />
      </div>
      <div className="flex-1 flex min-h-0 border-t-[1px] border-[#3c3c3c]">
        <div className="flex flex-col w-[198px] shrink-0 border-t-[3px] border-[#808080]">
          <Thumbs />
        </div>
        <Strip />
        <div className="w-[1308px] shrink-0 flex flex-col min-w-0 overflow-hidden">
          <div className="h-[16px] mt-[4px] flex items-center shrink-0 pl-[4px]">
            <span className="w-[15px] flex justify-center"><svg width="13" height="13" viewBox="0 0 13 13"><path d="M6.500 0v13M0 6.500h13" stroke="#fff" /></svg></span>
            <div className="w-[1285px] h-full bg-[#2d2d2d] flex items-center">
              <span className="w-[47px] h-full border border-[#777] border-r-0 bg-[#3c3c3c] shrink-0" />
              <HRuler from={1} to={28} pitch="w-[44.2px]" />
            </div>
          </div>
          <div className="flex-1 flex min-h-0 pl-[4px] pt-[3px]">
            <VRuler />
            <div className="ml-[24px] pt-[99px]"><Slide /></div>
          </div>
          <div className="h-[11px] shrink-0 bg-[#353535] flex items-center pl-[431px]">
            <span className="w-[444px] h-[6px] bg-[#ababab] rounded-sm" />
          </div>
        </div>
        <div className="w-[10px] shrink-0 bg-[#353535] pt-[168px] pl-[1px]">
          <div className="w-[6px] h-[567px] bg-[#ababab] rounded-sm" />
        </div>
        <Strip />
        <ImpressSidebar />
      </div>
      <div className="h-[23px] shrink-0 border-t-[3px] border-[#808080] flex items-center text-[13px] text-[#dddddd] pl-[10px] whitespace-nowrap">
        <span className="w-[706px]">Diapo 5 de 7</span>
        <span className="w-[338px]">Standard</span>
        <span className="w-[24px] text-[#e8762c]">+</span>
        <span className="w-[82px]">5,93 / 7,62</span>
        <span className="w-[24px] text-[#e8762c]">↔</span>
        <span className="w-[83px]">0,00 x 0,00</span>
        <span className="w-[10px] h-[12px] bg-[#eeeeee] mr-[184px]" />
        <span className="w-[245px]">Français (France)</span>
        <span className="w-[10px] h-[16px] bg-[#dddddd] mr-[8px]" />
        <Slider />
        <span className="ml-[14px]">117 %</span>
      </div>
    </div>
  );
}

function Fld() {
  return <span className="inline-block w-[3px] h-[20px] bg-[#c0c0c0] align-middle" />;
}

const docLines: { t: ReactNode; i?: boolean }[] = [
  { t: "pourquoi je suis cette formation" },
  { t: "moi, mon parcours. Python, mon site" },
  { t: "" }, { t: "" },
  { t: "Prenez le temps de réfléchir à ce que vous aimeriez que cette formation apporte à votre parcours", i: true },
  { t: <>professionnel:<Sp>Javascript</Sp></>, i: true },
  { t: "" }, { t: "" },
  { t: <>diapo 4<Fld /> :</> },
  { t: "les projets du parcours qui me motivent ou qui me paraissent les plus difficiles et pourquoi" },
  { t: "projets les plus difficiles (ou les moins motivants pour moi)" },
  { t: "Quels sont les projets qui me motivent le plus ? Il peut s’agir des projets qui se rapprochent le plus des", i: true },
  { t: "missions que vous aimeriez exercer par la suite.", i: true },
  { t: "Quels sont les projets qui me semblent les plus difficiles a priori ? Essayez d’identifier les projets qui", i: true },
  { t: "vous feront le plus sortir de votre zone de confort. Il peut s’agir des projets qui couvrent des", i: true },
  { t: "compétences ou des outils très éloignés de vos expériences passées.", i: true },
  { t: "" },
  { t: <>diapo 5<Fld /> :</> },
  { t: <>Formation à temps partiel, qui <Sp>vas’étaler</Sp> sur <Sp>uen</Sp> <Sp>duréede</Sp> 15 mois et qui a <Sp>commencélasemaine</Sp> dernière</> },
  { t: <>et devrait donc <Sp>setermienr</Sp> le 12 mai 2024</> },
  { t: "mon planning projet (j’ai vu avec mon mentor la semaine dernière)" },
  { t: "" }, { t: "" },
  { t: <>diapo 6<Fld /> :</> },
  { t: "Prenez le temps ici d’anticiper les difficultés éventuelles que vous", i: true },
  { t: "pourrez rencontrer, et comment vous pourrez les surmonter.", i: true },
  { t: "Listez 2 à 4 bonnes pratiques que vous pensez appliquer durant", i: true },
  { t: "votre formation pour bien gérer votre temps et vous tenir aux", i: true },
  { t: "dates que vous avez fixées.", i: true },
  { t: "mon planning perso, mes jours de formation, une journée type, les difficultés que je vais rencontrer" },
  { t: "- difficulté éventuelle: \"surchauffe\" due au double emploi du temps. Me réserver des plages horaires", i: true },
  { t: "pour moi.", i: true },
  { t: "- difficulté éventuelle: maladie. Garder des jours de congé \"en stock\" pour rattraper.", i: true },
  { t: "-" },
];

const navItems = [
  ["Tableaux", "nTable"], ["Cadres", "nFrame"], ["Images", "nImage"], ["Objets OLE", "nOle"], ["Repères de texte", "nStar"],
  ["Sections", "nSec"], ["Hyperliens", "link"], ["Références", "nRef"], ["Index", "nIdx"], ["Commentaires", "nCom"], ["Objets de dessin", "nDraw"],
];

function Navigator() {
  return (
    <div className="flex-1 flex flex-col border-t-[3px] border-[#808080] min-w-0">
      <div className="flex flex-1">
        <div className="w-[344px] ml-[4px] shrink-0 flex flex-col pb-[6px] border-l border-[#2e2e2e]">
          <div className="h-[27px] mt-[1px] flex items-center border-b border-[#333] shrink-0">
            <span className="ml-[6px] h-[14px] border-l-2 border-dotted border-[#777]" />
            <span className="ml-[19px] font-bold text-[14px] text-[#eeeeee]">Navigateur</span>
            <span className="ml-auto mr-[5px] text-[12px] text-[#555]">x</span>
          </div>
          <div className="flex items-center h-[33px] mt-[7px] pl-[6px]">
            <Ico k="compass" size={22} />
            <span className="mx-[4px]"><Caret /></span>
            <span className="ml-[3px]"><Ico k="dimleft" size={20} /></span>
            <span className="ml-[5px]"><Ico k="dimright" size={20} /></span>
            <span className="ml-[10px] w-[114px] h-[33px] rounded-md bg-[#2c2c2c] border border-[#222] flex items-center text-[13px] text-[#f0a050] pl-[4px]">
              <span className="w-[39px]">1</span>
              <span className="w-[36px] h-full border-x border-[#444] flex items-center justify-center text-[#dddddd] text-[18px]">−</span>
              <span className="flex-1 flex items-center justify-center text-[#dddddd] text-[18px]">+</span>
            </span>
            <span className="ml-[10px]"><Ico k="link" size={20} /></span>
            <span className="ml-[5px]"><Caret /></span>
            <span className="ml-[14px]"><Ico k="navup" size={18} /></span>
            <span className="ml-[7px]"><Ico k="navdown" size={18} /></span>
          </div>
          <div className="flex items-center h-[33px] pl-[7px]">
            <Ico k="mail" size={20} />
            <span className="ml-[14px]"><Ico k="clip" size={20} /></span>
            <span className="ml-[13px]"><Ico k="hdr" size={20} /></span>
            <span className="ml-[5px]"><Ico k="ftr" size={20} /></span>
            <span className="ml-[5px]"><Ico k="anchor" size={20} /></span>
            <span className="ml-[11px]"><Ico k="hH" size={20} /></span>
            <span className="ml-[2px]"><Caret /></span>
            <span className="ml-[12px]"><Ico k="navleft" size={20} /></span>
            <span className="ml-[6px]"><Ico k="navright" size={20} /></span>
          </div>
          <div className="mx-[5px] mt-[8px] flex-1 bg-[#333333] text-[13.500px] pt-[1px]">
            <div className="h-[20px] flex items-center pl-[23px]">
              <span className="w-[16px] text-center font-bold text-[#555]">H</span>
              <span className="ml-[6px] px-px bg-[#e95420] text-white">Titres</span>
            </div>
            {navItems.map(([label, k]) => (
              <div key={label} className="h-[20px] flex items-center pl-[23px] text-[#7a7a7a]">
                <Ico k={k} size={16} />
                <span className="ml-[6px]">{label}</span>
              </div>
            ))}
          </div>
          <div className="mx-[5px] mt-[8px] h-[33px] shrink-0 rounded bg-[#474747] border border-[#262626] flex items-center justify-between pl-[10px] pr-[12px] text-[14px] text-[#e6e6e6]">
            projet01_soutenance (actif)<span className="w-0 h-0 border-x-[5px] border-x-transparent border-t-[5px] border-t-white" />
          </div>
        </div>
        <SideTabs items={["gear", "toggle", "page", "abrush", "gallery", "compass"]} selected={5} />
      </div>
    </div>
  );
}

function WriterRuler() {
  return (
    <div className="h-[15px] mt-[4px] flex shrink-0 pl-[276px]">
      <div className="w-[980px] h-full bg-[#2d2d2d] flex items-center relative">
        <span className="w-[91px] h-full border border-[#777] bg-[#3c3c3c] flex items-center justify-center text-[11px] leading-[13px] text-[#8e8e8e] shrink-0">1</span>
        <span className="w-[22.700px]" />
        <HRuler from={1} to={19} pitch="w-[45.400px]" />
        <span className="absolute left-[889px] right-0 top-0 h-full border border-[#777]" />
      </div>
    </div>
  );
}

function FindBar() {
  return (
    <div className="h-[40px] shrink-0 flex items-center text-[13px] whitespace-nowrap">
      <span className="ml-[18px] w-[18px] h-[24px] rounded-full bg-[#c7162b] text-white text-center leading-[22px] text-[13px]">x</span>
      <div className="ml-[8px] w-[250px] h-[33px] bg-[#2f2f2f] border border-[#222] rounded flex items-center">
        <span className="flex-1 pl-[10px] text-[14px] text-[#777]">Rechercher</span>
        <span className="w-[33px] h-full bg-[#474747] flex items-center justify-center"><Caret /></span>
      </div>
      <span className="ml-[6px]"><Ico k="navup" size={24} /></span>
      <span className="ml-[10px]"><Ico k="navdown" size={24} /></span>
      <span className="ml-[6px] text-[#707070]">Tout rechercher</span>
      <span className="ml-[10px] w-[15px] h-[24px] rounded border border-[#222] bg-[#474747]" />
      <span className="ml-[7px] text-[14px] text-[#dddddd]">Respecter la casse</span>
      <span className="ml-[16px]"><Ico k="spell" /></span>
      <div className="ml-[11px] w-[150px] h-[33px] rounded border border-[#222] bg-[#474747] flex items-center pl-[11px] pr-[11px] text-[14px] text-[#eeeeee]">
        <span className="w-[10px] h-[22px] bg-[#e8e8e8] mr-[8px]" />Page<span className="ml-auto"><Caret /></span>
      </div>
      <span className="ml-[6px]"><Ico k="dimup" /></span>
      <span className="ml-[9px]"><Ico k="dimdown" /></span>
    </div>
  );
}

function Combo({ w, t }: { w: string; t: string }) {
  return (
    <div className={`${w} h-[33px] rounded-md border border-[#222] bg-[#333] flex items-center text-[14px] text-[#e6e6e6] shrink-0`}>
      <span className="flex-1 ml-[10px] mr-[8px] whitespace-nowrap overflow-hidden">{t}</span>
      <span className="w-[33px] h-full bg-[#4a4a4a] rounded-r-md flex items-center justify-center shrink-0"><span className="w-0 h-0 border-x-[4px] border-x-transparent border-t-[5px] border-t-white" /></span>
    </div>
  );
}

function DockFirefox() {
  return <svg width="44" height="42" viewBox="0 0 44 42"><circle cx="22" cy="23" r="18" fill="#f05a28" /><circle cx="22" cy="25" r="10" fill="#7a3fb8" /><path d="M28 2c8 8 12 14 12 22l-8-8z" fill="#ffb02a" /><path d="M6 16c4-8 10-10 14-8l-6 10z" fill="#ffcf3a" /></svg>;
}
function DockChrome() {
  return <svg width="44" height="42" viewBox="0 0 44 42"><circle cx="22" cy="21" r="20" fill="#4caf50" /><path d="M22 1a20 20 0 0 1 18 11H22a9 9 0 0 0-8 5L7 8a20 20 0 0 1 15-7z" fill="#e53935" /><path d="M40 12a20 20 0 0 1-18 29l9-15a9 9 0 0 0 0-14z" fill="#fbc02d" /><circle cx="22" cy="21" r="9" fill="#fff" /><circle cx="22" cy="21" r="7" fill="#3f80e8" /></svg>;
}
function DockBird() {
  return <svg width="44" height="42" viewBox="0 0 44 42"><circle cx="22" cy="21" r="20" fill="#2a62c0" /><path d="M5 18l16 8 18-10c1 14-6 24-18 24C11 40 5 30 5 18z" fill="#f2f2f2" /><circle cx="26" cy="12" r="6" fill="#1b3f8a" /></svg>;
}
function DockFiles() {
  return <svg width="44" height="42" viewBox="0 0 44 42"><rect x="5" y="1" width="34" height="40" rx="5" fill="#a49f8c" /><path d="M11 10h8l2 3h12v22H11z" fill="#f4f4f2" /></svg>;
}
function DockWriter() {
  return <svg width="44" height="42" viewBox="0 0 44 42"><path d="M7 1h22l8 8v32H7z" fill="#f2f2f2" stroke="#1f7fc0" strokeWidth="3" /><path d="M13 12h10v9H13z" fill="#1f7fc0" /><path d="M13 25h18M13 29h18M13 33h18" stroke="#1f7fc0" strokeWidth="2" /></svg>;
}
function DockHelp() {
  return <svg width="44" height="42" viewBox="0 0 44 42"><circle cx="22" cy="21" r="20" fill="#2a8fe0" /><text x="22" y="31" textAnchor="middle" fontSize="28" fontFamily="Noto Sans" fill="#fff">?</text></svg>;
}
function DockStore() {
  return <svg width="44" height="42" viewBox="0 0 44 42"><rect x="4" y="8" width="36" height="33" rx="4" fill="#e95420" /><path d="M15 8a7 7 0 0 1 14 0" stroke="#ddd" strokeWidth="2" fill="none" /><text x="22" y="35" textAnchor="middle" fontSize="24" fontWeight="700" fontFamily="Noto Sans" fill="#fff">A</text></svg>;
}
function DockTerm() {
  return <svg width="44" height="42" viewBox="0 0 44 42"><rect x="5" y="3" width="34" height="36" rx="4" fill="#4a4a4a" /><path d="M11 12l4 3-4 3M17 20h5" stroke="#eee" strokeWidth="2" fill="none" /></svg>;
}
function DockImpress() {
  return <svg width="44" height="42" viewBox="0 0 44 42"><path d="M7 1h22l8 8v32H7z" fill="#f2f2f2" stroke="#d9661e" strokeWidth="3" /><path d="M13 13h18v3H13z" fill="#d9661e" /><path d="M13 18h9v10h-9z" fill="#8a6a4a" /><path d="M24 18h7v10h-7z" fill="#72a85a" /></svg>;
}

function Dock() {
  return (
    <div className="h-[60px] shrink-0 bg-[#1e1220] flex items-center pl-[1px]">
      {[
        <DockFirefox key="f" />, <DockChrome key="c" />, <DockBird key="t" />, <DockFiles key="n" />, <DockWriter key="w" />,
        <DockHelp key="h" />, <DockStore key="s" />, <DockTerm key="x" />, <DockImpress key="i" />,
      ].map((ic, i) => (
        <div key={i} className={`h-[56px] flex flex-col items-center justify-center shrink-0 ${i === 8 ? "w-[56px] ml-[4px] bg-[#453c48] rounded-md" : "w-[64px]"}`}>
          {ic}
          <span className={`w-[4px] h-[4px] rounded-full mt-[2px] ${[1, 3, 4, 8].includes(i) ? "bg-[#e95420]" : ""}`} />
        </div>
      ))}
      <div className="ml-auto mr-[20px] grid grid-cols-3 gap-x-[5px] gap-y-[6px]">
        {[1, 2, 3, 4, 5, 6, 7, 8, 9].map((n) => <span key={n} className="w-[5px] h-[6px] bg-[#eeeeee] rounded-sm" />)}
      </div>
    </div>
  );
}

function WriterWindow() {
  return (
    <div className="flex-1 flex flex-col h-[1080px] bg-[#3c3c3c] font-['Noto_Sans',sans-serif] min-w-0">
      <div className="h-[27px] shrink-0 bg-[#1b1b1b] flex items-center text-[14px] text-[#eeeeee] relative">
        <span className="ml-[12px]">Activités</span>
        <span className="ml-[36px] mr-[6px] w-[12px] h-[15px] bg-[#eeeeee] rounded-sm" />
        <span>LibreOffice Impress</span>
        <span className="ml-[6px]"><span className="block w-0 h-0 border-x-[4px] border-x-transparent border-t-[5px] border-t-white" /></span>
        <span className="absolute left-[914px]">17 févr.  14:38</span>
        <div className="ml-auto mr-[15px] flex items-center gap-[14px]">
          <svg width="16" height="16" viewBox="0 0 16 16"><path d="M6 1h4v4H6zM1 11h4v4H1zM11 11h4v4h-4z" fill="#fff" /><path d="M8 5v3M3 11V8h10v3" stroke="#fff" fill="none" /></svg>
          <span className="w-[10px] h-[16px] bg-white rounded-sm" />
          <svg width="16" height="16" viewBox="0 0 16 16"><path d="M1 5h3l4-3v12l-4-3H1z" fill="#eee" /><path d="M11 5c1 2 1 4 0 6M13 3c2 3 2 7 0 10" stroke="#aaa" fill="none" /></svg>
          <span className="ml-[8px] w-0 h-0 border-x-[5px] border-x-transparent border-t-[6px] border-t-white" />
        </div>
      </div>
      <div className="h-[36px] shrink-0 border-b border-[#2b2b2b] flex items-center relative">
        <span className="absolute left-[800px] text-[14.500px] font-bold text-[#9a9a9a]">projet01_soutenance.odt - LibreOffice Writer</span>
        <div className="ml-auto flex items-center mr-[8px]">
          <span className="w-[8px] h-px bg-[#8a8a8a] mt-[8px]" />
          <span className="ml-[26px] w-[7px] h-[9px] border border-[#8a8a8a]" />
          <span className="ml-[21px] w-[20px] h-[20px] rounded-full bg-[#555] text-white text-[13px] leading-[19px] text-center">x</span>
        </div>
      </div>
      <div className="h-[25px] shrink-0 flex items-center gap-[15.500px] pl-[8px] text-[14px] text-[#9a9a9a] border-b border-[#333]">
        {["Fichier", "Édition", "Affichage", "Insertion", "Format", "Styles", "Tableau", "Formulaire", "Outils", "Fenêtre", "Aide"].map((m) => <span key={m}>{m}</span>)}
      </div>
      <div className="h-[39px] shrink-0 flex items-center pl-[4px]">
        <Grip /><span className="w-[6px]" />
        <IconBar items="newW v folder v saveR v | pdf print preview | cutG copyG pasteO v | brushO | undo v redo ^ | spell abc para | tablep v img chart textbox | pagebr field v omega v | linkp foot end bookmark xref | comment track | line diamond v shapes" />
        <span className="w-[6px]" /><Grip /><span className="w-[6px]" />
        <IconBar items="select *design props tag textA check radio listb combo btn imgbtn fmt calc numf date clock currency pattern imgctl" />
        <span className="ml-[-4px]"><Ico k="more" /></span>
      </div>
      <div className="h-[39px] shrink-0 flex items-center pl-[4px]">
        <Grip /><span className="w-[5px]" />
        <Combo w="w-[143px]" t="Style par défaut" />
        <span className="w-[5px]" />
        <span className="w-[28px] flex justify-center"><Ico k="styleup" /></span>
        <span className="w-[29px] flex justify-center"><Ico k="stylenew" /></span>
        <span className="w-[5px]" />
        <Combo w="w-[143px]" t="Liberation Serif" />
        <span className="w-[9px]" />
        <Combo w="w-[85px]" t="12" />
        <span className="w-[9px]" />
        <IconBar items="bold ital under strike | sup sub | erase | colorA v hl v | *alL alC alR alJ | alJ v num v | indent outdent | alJ v psp tabs" />
      </div>
      <div className="flex-1 flex min-h-0 relative">
        <div className="w-[1522px] shrink-0 flex flex-col overflow-hidden">
          <WriterRuler />
          <div className="flex-1 flex min-h-0 mt-[5px] border-t border-[#222]">
            <div className="w-[276px] shrink-0 pl-[3px]">
              <div className="w-[15px] h-[12px] border border-[#777]" />
              <div className="w-[15px] h-full bg-[#2d2d2d]" />
            </div>
            <div className="w-[980px] bg-white pl-[92px] pr-[20px] pt-[13px] overflow-hidden shrink-0 font-['Liberation_Serif',serif] text-[19.200px] leading-[22.060px] text-black">
              {docLines.map((l, i) => <div key={i} className={`h-[22.060px] whitespace-nowrap ${l.i ? "italic" : ""}`}>{l.t}</div>)}
            </div>
            <div className="flex-1 pl-[257px] pt-[405px]">
              <div className="w-[6px] h-[226px] bg-[#ababab] rounded-sm" />
            </div>
          </div>
        </div>
        <Strip dark />
        <Navigator />
      </div>
      <FindBar />
      <div className="h-[23px] shrink-0 border-t-[3px] border-[#808080] flex items-center text-[13px] text-[#d4d4d4] pl-[10px] whitespace-nowrap">
        <span className="w-[264px]">Page 2 de 2</span>
        <span className="w-[418px]">818 mots, 5 145 caractères</span>
        <span className="w-[388px]">Style par défaut</span>
        <span className="w-[270px]">Français (France)</span>
        <span className="w-[10px] h-[12px] bg-[#e8862c] mr-[438px]" />
        <span className="w-[60px] text-[#d0762c]">▯ ▯▯ ▯▯</span>
        <span className="w-[20px]" />
        <Slider />
        <span className="ml-[14px]">120 %</span>
      </div>
      <Dock />
    </div>
  );
}

export default function App() {
  return (
    <div className="flex w-[3840px] h-[1080px] overflow-hidden bg-[#3c3c3c]">
      <ImpressWindow />
      <WriterWindow />
    </div>
  );
}
